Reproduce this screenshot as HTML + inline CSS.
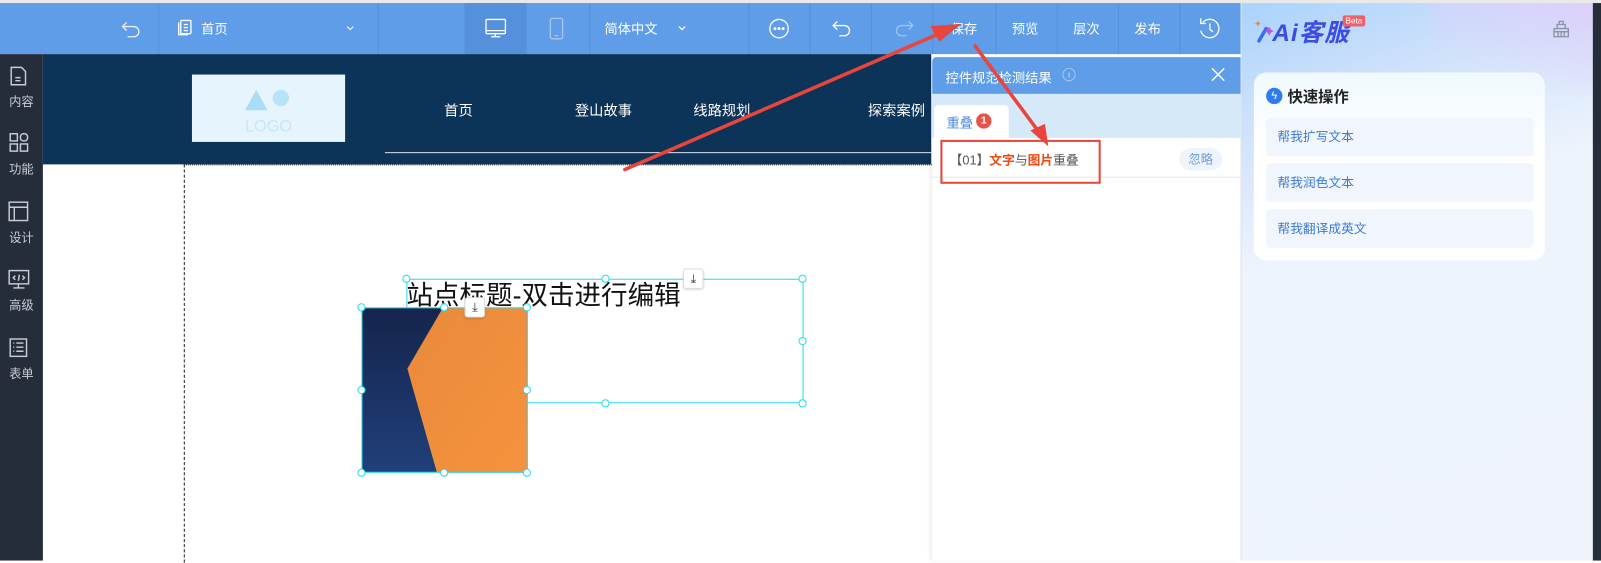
<!DOCTYPE html>
<html><head><meta charset="utf-8"><style>
*{margin:0;padding:0;box-sizing:border-box}
html,body{width:1601px;height:561px;overflow:hidden;background:#fff}
#w{position:absolute;left:0;top:0;width:1568px;height:549px;transform:scale(1.02105);transform-origin:0 0;font-family:"Liberation Sans","Noto Sans CJK SC",sans-serif;}
.a{position:absolute}
.tb{color:#fff;font-size:13px}
.div{position:absolute;top:3px;height:50px;width:1px;background:#5591de}
.side{position:absolute;left:0;width:42px;text-align:center;color:#c9ced6;font-size:12px}
.h{position:absolute;width:8px;height:8px;border:1px solid #22dcef;border-radius:50%;background:#fff}
.item{position:absolute;left:1240px;width:262px;height:38px;background:#f1f5fd;border-radius:4px;color:#3a7bd5;font-size:12.5px;line-height:38px;padding-left:11px}
.dl{position:absolute;width:20px;height:20px;background:#fff;border:1px solid #ddd;border-radius:3px;box-shadow:0 1px 2px rgba(0,0,0,.15);font-size:12px;line-height:18px;text-align:center;color:#333}
</style></head><body><div id="w">
<div class="a" style="left:0;top:0;width:1568px;height:3px;background:#e9e9e9"></div>
<div class="a" style="left:0;top:3px;width:1215px;height:50px;background:#5f9de8"></div>
<div class="a" style="left:455px;top:3px;width:60px;height:50px;background:#5590dc"></div>
<div class="div" style="left:155px"></div><div class="div" style="left:370px"></div><div class="div" style="left:455px"></div><div class="div" style="left:515px"></div><div class="div" style="left:577px"></div><div class="div" style="left:733px"></div><div class="div" style="left:793px"></div><div class="div" style="left:853px"></div><div class="div" style="left:913px"></div><div class="div" style="left:975px"></div><div class="div" style="left:1035px"></div><div class="div" style="left:1095px"></div><div class="div" style="left:1155px"></div>
<svg class="a" style="left:0;top:3px" width="1215" height="50" fill="none" stroke="#fff" stroke-width="1.3">
<path d="M124 19l-4 4 4 4M120 23h11a5 5 0 0 1 0 10h-6" stroke="#e8f0fb"/>
<rect x="177" y="17" width="10" height="13" rx="1"/><path d="M175 19v12h9M180 21h4M180 24h4M180 27h4"/>
<path d="M340 23l3 3 3-3" stroke="#e6eefb"/>
<rect x="476" y="16" width="19" height="14" rx="1"/><path d="M476 27h19M485 30v3M481 33h9"/>
<rect x="539" y="15" width="12" height="20" rx="2" stroke="#a9c8f0"/><path d="M543 32h4" stroke="#a9c8f0"/>
<path d="M665 23l3 3 3-3"/>
<circle cx="763" cy="25" r="9"/><circle cx="759" cy="25" r=".8" fill="#fff"/><circle cx="763" cy="25" r=".8" fill="#fff"/><circle cx="767" cy="25" r=".8" fill="#fff"/>
<path d="M820 18l-4 4 4 4M816 22h11a5 5 0 0 1 0 10h-5"/>
<path d="M890 18l4 4-4 4M894 22h-11a5 5 0 0 0 0 10h5" stroke="#9fc2ee"/>
<path d="M1178 19a9 9 0 1 1 -2 8M1176 15v5h5M1185 20v6l3 2"/>
</svg>
<div class="a tb" style="left:197px;top:18px">首页</div>
<div class="a tb" style="left:592px;top:18px">简体中文</div>
<div class="a tb" style="left:931px;top:18px">保存</div>
<div class="a tb" style="left:991px;top:18px">预览</div>
<div class="a tb" style="left:1051px;top:18px">层次</div>
<div class="a tb" style="left:1111px;top:18px">发布</div>
<div class="a" style="left:0;top:53px;width:42px;height:496px;background:#252d3b"></div>
<svg class="a" style="left:0;top:53px" width="42" height="320" fill="none" stroke="#c9ced6" stroke-width="1.4">
<path d="M11 13h10l4 4v13H11zM15 23h5M15 26h5"/>
<rect x="10" y="78" width="7" height="7"/><rect x="20" y="78" width="7" height="7" rx="3"/><rect x="10" y="88" width="7" height="7"/><rect x="20" y="88" width="7" height="7"/>
<rect x="9" y="145" width="18" height="18"/><path d="M9 150h18M14 150v13"/>
<rect x="9" y="212" width="19" height="13"/><path d="M18 225v4M13 229h11M15 217l-2 2 2 2M22 217l2 2-2 2M19 216l-1 6"/>
<rect x="10" y="279" width="16" height="17"/><path d="M13 283h1M16 283h7M13 287h1M16 287h7M13 291h1M16 291h7"/>
</svg>
<div class="side" style="top:91px">内容</div><div class="side" style="top:157px">功能</div><div class="side" style="top:224px">设计</div><div class="side" style="top:290px">高级</div><div class="side" style="top:357px">表单</div>
<div class="a" style="left:42px;top:53px;width:870px;height:108px;background:#0c3358"></div>
<div class="a" style="left:188px;top:73px;width:150px;height:66px;background:#e6f4fd"></div>
<svg class="a" style="left:188px;top:73px" width="150" height="66"><path d="M52 35l11-20 11 20z" fill="#a9dcf7"/><circle cx="87" cy="23" r="8" fill="#b7e2f8"/><text x="75" y="56" font-size="16" fill="#c7e8fa" text-anchor="middle" font-family="Liberation Sans">LOGO</text></svg>
<div class="a tb" style="left:435px;top:98px;font-size:14px">首页</div>
<div class="a tb" style="left:563px;top:98px;font-size:14px">登山故事</div>
<div class="a tb" style="left:679px;top:98px;font-size:14px">线路规划</div>
<div class="a tb" style="left:850px;top:98px;font-size:14px">探索案例</div>
<div class="a" style="left:377px;top:149px;width:535px;height:1px;background:#d9e2ea"></div>
<div class="a" style="left:180px;top:161px;width:733px;border-top:1px dotted #222"></div>
<div class="a" style="left:180px;top:161px;height:390px;border-left:1px dashed #222"></div>
<div class="a" style="left:398px;top:273px;width:389px;height:122px;border:1px solid #22dcef"></div>
<div class="a" style="left:398px;top:269px;font-size:26px;color:#111;white-space:nowrap">站点标题-双击进行编辑</div>
<svg class="a" style="left:354px;top:301px" width="162" height="162"><defs><linearGradient id="g1" x1="0" y1="0" x2="0" y2="1"><stop offset="0" stop-color="#15244c"/><stop offset="1" stop-color="#20407a"/></linearGradient><linearGradient id="g2" x1="0" y1="0" x2="1" y2="1"><stop offset="0" stop-color="#e88a3c"/><stop offset="1" stop-color="#f6923d"/></linearGradient></defs><rect width="162" height="162" fill="url(#g1)"/><path d="M80 0h82v162H74L50 78 45 60z" fill="url(#g2)"/></svg>
<div class="a" style="left:354px;top:301px;width:163px;height:162px;border:1px solid #22dcef"></div>
<div class="h" style="left:394px;top:269px"></div><div class="h" style="left:589px;top:269px"></div><div class="h" style="left:782px;top:269px"></div><div class="h" style="left:782px;top:330px"></div><div class="h" style="left:589px;top:391px"></div><div class="h" style="left:782px;top:391px"></div>
<div class="h" style="left:350px;top:297px"></div><div class="h" style="left:431px;top:297px"></div><div class="h" style="left:512px;top:297px"></div><div class="h" style="left:350px;top:378px"></div><div class="h" style="left:512px;top:378px"></div><div class="h" style="left:350px;top:459px"></div><div class="h" style="left:431px;top:459px"></div><div class="h" style="left:512px;top:459px"></div>
<div class="dl" style="left:669px;top:263px">⤓</div><div class="dl" style="left:455px;top:291px">⤓</div>
<div class="a" style="left:913px;top:56px;width:302px;height:493px;background:#fff;box-shadow:-2px 0 4px rgba(0,0,0,.08)"></div>
<div class="a" style="left:913px;top:56px;width:302px;height:36px;background:#5f9de8;border-radius:4px 0 0 0"></div>
<div class="a tb" style="left:926px;top:66px">控件规范检测结果</div>
<svg class="a" style="left:1040px;top:65px" width="170" height="20" fill="none" stroke="#a5c6ef"><circle cx="7" cy="8" r="6"/><path d="M7 6v5" stroke-width="1.4"/><path d="M147 2l12 12M159 2l-12 12" stroke="#fff" stroke-width="1.4"/></svg>
<div class="a" style="left:913px;top:92px;width:302px;height:43px;background:#d6e9f9"></div>
<div class="a" style="left:915px;top:103px;width:73px;height:32px;background:#fff;border-radius:4px 4px 0 0"></div>
<div class="a" style="left:927px;top:110px;font-size:13px;color:#4a8be0">重叠</div>
<div class="a" style="left:956px;top:111px;width:15px;height:15px;border-radius:50%;background:#e8504a;color:#fff;font-size:10px;line-height:15px;text-align:center;font-weight:bold">1</div>
<div class="a" style="left:913px;top:173px;width:302px;height:1px;background:#e6e6e6"></div>
<div class="a" style="left:930px;top:146px;font-size:12.5px;color:#555">【01】<b style="color:#f04a10;font-weight:bold">文字</b>与<b style="color:#f04a10">图片</b>重叠</div>
<div class="a" style="left:1155px;top:145px;width:42px;height:22px;border-radius:11px;background:#eef4fc;color:#6e9be0;font-size:12px;line-height:22px;text-align:center">忽略</div>
<div class="a" style="left:921px;top:137px;width:157px;height:43px;border:2px solid #e8453c"></div>
<div class="a" style="left:1215px;top:3px;width:345px;height:546px;background:linear-gradient(160deg,#a9d3fb 0%,#cfe1fb 18%,#eef4fc 40%,#eff4fc 100%);border-left:1px solid #d8e1ee"></div>
<div class="a" style="left:1400px;top:3px;width:160px;height:90px;background:linear-gradient(200deg,#ddd0fa,rgba(230,230,250,0) 70%)"></div>
<div class="a" style="left:1560px;top:3px;width:8px;height:546px;background:#252d3b"></div>
<svg class="a" style="left:1228px;top:14px" width="120" height="30"><path d="M5 26l7-12" stroke="#3a6ff0" stroke-width="3.5" stroke-linecap="round"/><path d="M4 6l1 2 2 1-2 1-1 2-1-2-2-1 2-1z" fill="#f58a3a"/><path d="M15 12l1.5 3 3 1.5-3 1.5-1.5 3-1.5-3-3-1.5 3-1.5z" fill="#c54ee8"/></svg>
<div class="a" style="left:1246px;top:12px;font-size:24px;font-weight:bold;font-style:italic;color:#3d4de0;letter-spacing:1px">Ai客服</div>
<div class="a" style="left:1315px;top:15px;width:22px;height:11px;background:#f0606a;color:#fff;font-size:8px;line-height:11px;text-align:center;border-radius:2px">Beta</div>
<svg class="a" style="left:1519px;top:19px" width="20" height="20" fill="none" stroke="#8a93a8" stroke-width="1.3"><path d="M3 9h14v8H3zM6 9V5h8v4M8 5V2h4v3M3 12h14M7 12v5M10 12v5M13 12v5"/></svg>
<div class="a" style="left:1228px;top:71px;width:285px;height:184px;background:linear-gradient(#f0f9fe,#fff 40%);border-radius:12px"></div>
<div class="a" style="left:1240px;top:86px;width:16px;height:16px;border-radius:50%;background:#2f7cf0;color:#fff;font-size:11px;line-height:16px;text-align:center">ϟ</div>
<div class="a" style="left:1261px;top:84px;font-size:15px;font-weight:bold;color:#222">快速操作</div>
<div class="item" style="top:115px">帮我扩写文本</div>
<div class="item" style="top:160px">帮我润色文本</div>
<div class="item" style="top:205px">帮我翻译成英文</div>
<svg class="a" style="left:0;top:0" width="1568" height="549"><g fill="#e8453c" stroke="#e8453c" stroke-linecap="round"><path d="M612 166L922 32" stroke-width="3.5"/><path d="M940 24L912 26 920 40z"/><path d="M955 45L1018 130" stroke-width="3.5"/><path d="M1026 142L1010 128 1023 122z"/></g></svg>
</div></body></html>
